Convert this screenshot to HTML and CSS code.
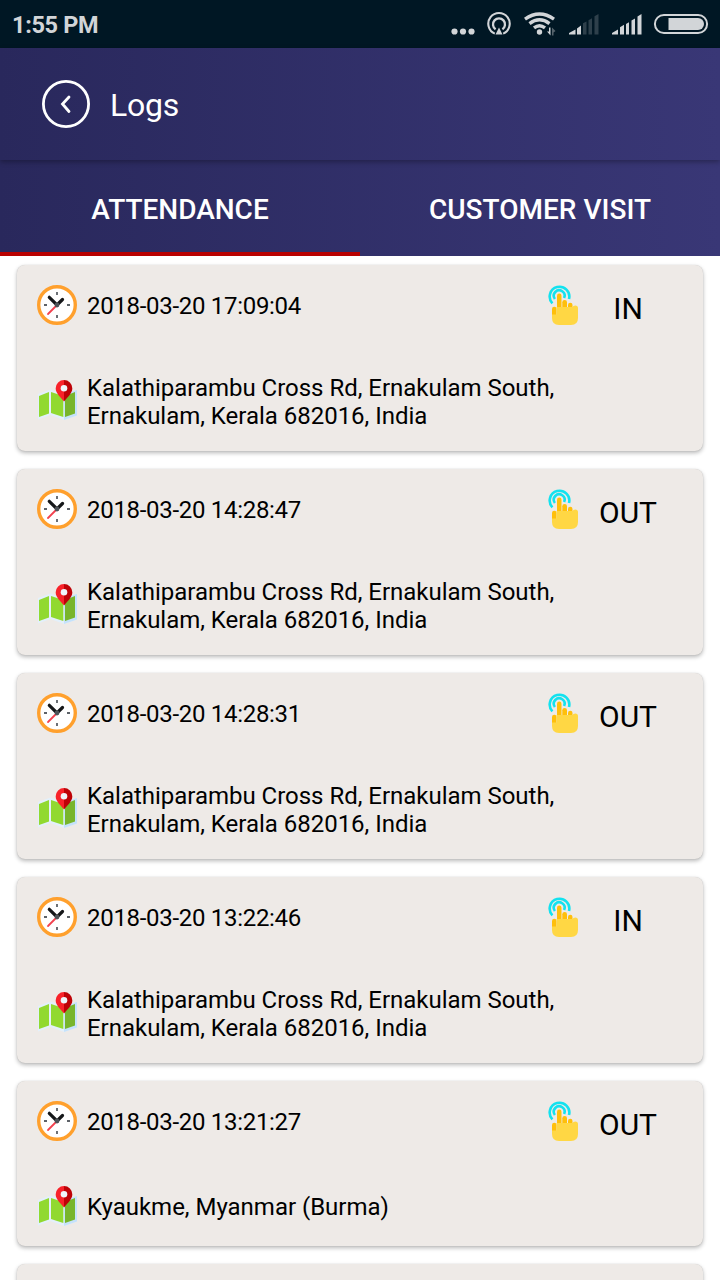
FILE: index.html
```html
<!DOCTYPE html>
<html lang="en">
<head>
    <meta charset="UTF-8" />
    <title>Logs</title>
    <link rel="stylesheet" href="styles.css">
</head>

<body>
<!-- Shared icons -->
<svg class="sprite" width="0" height="0">
    <symbol id="icon-clock" viewBox="0 0 40 40">
        <circle cx="20" cy="20" r="18.3" fill="#fff" stroke="#ffa02d" stroke-width="3.4"/>
        <path d="M20 7v3M20 30v3M7 20h3M30 20h3" stroke="#5d6268" stroke-width="1.8"/>
        <path d="M20 20l-9 9" stroke="#f2414e" stroke-width="1.8" stroke-linecap="round"/>
        <path d="M12.3 12.3L20 20l5.5-5.5" fill="none" stroke="#151719" stroke-width="3.2" stroke-linecap="round"/>
        <circle cx="20" cy="20" r="2.4" fill="#4d5257"/>
    </symbol>
    <symbol id="icon-map" viewBox="0 0 40 40">
        <path d="M1 14L13.5 9.5l13.5 4.5L40 10v25.5L27 40l-13.5-5L1 39.5z" fill="#e3f0fb"/>
        <path d="M27 14L40 10v25.5L27 40z" fill="#c5e2fb"/>
        <path d="M2 16l10-4v21.5L2 37z" fill="#91d930"/>
        <path d="M14 12l12.3 4v21L14 33z" fill="#91d930"/>
        <path d="M28 16l10-4v21.5L28 37z" fill="#78b52c"/>
        <path d="M27 0a8.3 8.3 0 0 0-8.3 8.4C18.7 13 23 16.5 27 21.5z" fill="#f8222a"/>
        <path d="M27 0a8.3 8.3 0 0 1 8.3 8.4C35.3 13 31 16.5 27 21.5z" fill="#be0207"/>
        <circle cx="27" cy="8.2" r="3.3" fill="#eff5fa"/>
    </symbol>
    <symbol id="icon-touch" viewBox="0 0 40 40">
        <g fill="none" stroke="#13e2ef" stroke-width="2.6">
            <path d="M9.4 18.3A9.8 9.8 0 1 1 26 14"/>
            <path d="M11.9 14A5.4 5.4 0 1 1 21.1 13"/>
        </g>
        <g fill="#ffbf0b">
            <rect x="14" y="8.500" width="4.500" height="20" rx="2.200"/>
            <rect x="19.300" y="15" width="4.700" height="14" rx="2.300"/>
            <rect x="25" y="17.800" width="4.500" height="12" rx="2.200"/>
            <rect x="9" y="21.700" width="4.500" height="10" rx="2.200"/>
        </g>
        <path d="M9 29.500h4.500V22h16.300q0-1.500 2.500-1.500 2.700 0 2.700 2.500v10q0 7-7 7H16q-7 0-7-7z" fill="#ffd744"/>
    </symbol>
</svg>

<div class="status-bar">
    <div class="status-time">1:55 PM</div>
    <svg class="status-icons" width="280" height="48" viewBox="0 0 280 48" fill="#d2d5d8">
        <!-- More notifications -->
        <circle cx="14.5" cy="31.5" r="3.1"/>
        <circle cx="23" cy="31.5" r="3.1"/>
        <circle cx="31.5" cy="31.5" r="3.1"/>
        <!-- Hotspot -->
        <g fill="none" stroke="#d2d5d8" stroke-width="2.1">
            <path d="M54.8 33.6A10.7 10.7 0 1 1 63.2 33.6"/>
            <path d="M55.6 29.3A6 6 0 1 1 62.4 29.3" stroke-width="2.3"/>
        </g>
        <path d="M59 27.5l3.5 7h-7z"/>
        <!-- Wifi -->
        <g fill="none" stroke="#d2d5d8" stroke-width="3.4">
            <path d="M85 19.2Q99.5 9 114 19.2"/>
            <path d="M89.5 23.6Q99.5 16 109.5 23.6"/>
            <path d="M94 27.8Q99.5 23.5 105 27.8"/>
        </g>
        <circle cx="99.5" cy="32" r="2.7"/>
        <path d="M110.5 27.5v8l-3.5-4h2v-4z"/>
        <path d="M112 27.5v8h1.5v-3l2-1.5z" opacity="0.4"/>
        <!-- Signal, first sim -->
        <path d="M129 34.5v-1.5l6.5-3.500v5zM137 28.500l4-3v9h-4z"/>
        <path d="M143 23.300l3.500-1.800v13H143zM148.500 20.200l3.500-2v16.300h-3.500zM154.500 16.200l4-2.200v20.500h-4z" opacity="0.22"/>
        <!-- Signal, second sim -->
        <path d="M172 34.500v-1.500l6-3.500v5zM180 27.300l4-2.500v9.700h-4zM186 24l3-1.800v12.300h-3zM191.500 20.500l3.500-2v16h-3.500zM197.500 16.500l4-2.500v20.500h-4z"/>
        <!-- Battery -->
        <rect x="214.9" y="15" width="52.2" height="18" rx="9" fill="none" stroke="#d2d5d8" stroke-width="2"/>
        <path d="M228.500 18H258a6 6 0 0 1 0 12h-29.500z"/>
    </svg>
</div>

<div class="header">
    <div class="toolbar">
        <svg class="back-button" width="48" height="48" viewBox="0 0 48 48" fill="none" stroke="#fff">
            <circle cx="24" cy="24" r="22.6" stroke-width="2.8"/>
            <path d="M27 17L20.500 24l6.500 7.500" stroke-width="2.8" stroke-linecap="round"/>
        </svg>
        <h1 class="title">Logs</h1>
    </div>
    <div class="tabs">
        <div class="tab active">ATTENDANCE</div>
        <div class="tab">CUSTOMER VISIT</div>
    </div>
</div>

<div class="log-list">
    <div class="log-card">
        <div class="log-row">
            <svg class="icon"><use href="#icon-clock"/></svg>
            <div class="date">2018-03-20 17:09:04</div>
            <svg class="icon touch"><use href="#icon-touch"/></svg>
            <div class="type">IN</div>
        </div>
        <div class="log-row address-row">
            <svg class="icon"><use href="#icon-map"/></svg>
            <div class="address">Kalathiparambu Cross Rd, Ernakulam South, Ernakulam, Kerala 682016, India</div>
        </div>
    </div>

    <div class="log-card">
        <div class="log-row">
            <svg class="icon"><use href="#icon-clock"/></svg>
            <div class="date">2018-03-20 14:28:47</div>
            <svg class="icon touch"><use href="#icon-touch"/></svg>
            <div class="type">OUT</div>
        </div>
        <div class="log-row address-row">
            <svg class="icon"><use href="#icon-map"/></svg>
            <div class="address">Kalathiparambu Cross Rd, Ernakulam South, Ernakulam, Kerala 682016, India</div>
        </div>
    </div>

    <div class="log-card">
        <div class="log-row">
            <svg class="icon"><use href="#icon-clock"/></svg>
            <div class="date">2018-03-20 14:28:31</div>
            <svg class="icon touch"><use href="#icon-touch"/></svg>
            <div class="type">OUT</div>
        </div>
        <div class="log-row address-row">
            <svg class="icon"><use href="#icon-map"/></svg>
            <div class="address">Kalathiparambu Cross Rd, Ernakulam South, Ernakulam, Kerala 682016, India</div>
        </div>
    </div>

    <div class="log-card">
        <div class="log-row">
            <svg class="icon"><use href="#icon-clock"/></svg>
            <div class="date">2018-03-20 13:22:46</div>
            <svg class="icon touch"><use href="#icon-touch"/></svg>
            <div class="type">IN</div>
        </div>
        <div class="log-row address-row">
            <svg class="icon"><use href="#icon-map"/></svg>
            <div class="address">Kalathiparambu Cross Rd, Ernakulam South, Ernakulam, Kerala 682016, India</div>
        </div>
    </div>

    <div class="log-card">
        <div class="log-row">
            <svg class="icon"><use href="#icon-clock"/></svg>
            <div class="date">2018-03-20 13:21:27</div>
            <svg class="icon touch"><use href="#icon-touch"/></svg>
            <div class="type">OUT</div>
        </div>
        <div class="log-row address-row">
            <svg class="icon"><use href="#icon-map"/></svg>
            <div class="address">Kyaukme, Myanmar (Burma)</div>
        </div>
    </div>

    <div class="log-card"></div>
</div>
</body>
</html>
```

FILE: styles.css
```css
* {
    margin: 0;
    padding: 0;
    box-sizing: border-box;
}

:root {
    --status-bg: #001724;
    --status-text: #d2d5d8;
    --header-from: #29285c;
    --header-to: #393776;
    --accent-color: #b80000;
    --card-bg: #eeeae7;
}

body {
    height: 100vh;
    display: flex;
    flex-direction: column;
    overflow: hidden;
    background-color: #fff;
    color: #000;
    font-family: Roboto, 'Liberation Sans', sans-serif;
}

.sprite {
    display: none;
}

.status-bar {
    display: flex;
    justify-content: space-between;
    align-items: center;
    flex: none;
    height: 48px;
    padding-left: 12px;
    background-color: var(--status-bg);
}

.status-time {
    padding-top: 2px;
    color: var(--status-text);
    font-size: 23.5px;
    font-weight: bold;
    letter-spacing: -0.35px;
}

/* Toolbar and tabs share one gradient */
.header {
    flex: none;
    background: linear-gradient(to right, var(--header-from), var(--header-to));
    color: #fff;
}

.toolbar {
    display: flex;
    align-items: center;
    gap: 20px;
    height: 112px;
    padding-left: 42px;
    box-shadow: 0 2px 5px rgba(0, 0, 0, 0.3);
}

.title {
    padding-top: 2px;
    font-size: 32px;
    font-weight: normal;
    letter-spacing: -0.2px;
}

.tabs {
    display: flex;
    height: 96px;
}

.tab {
    flex: 1;
    padding-top: 2px;
    border-bottom: 4px solid transparent;
    font-size: 28px;
    font-weight: 500;
    line-height: 96px;
    text-align: center;
}

.tab.active {
    border-bottom-color: var(--accent-color);
}

.log-list {
    display: flex;
    flex-direction: column;
    gap: 18px;
    padding: 9px 17px 0;
}

.log-card {
    flex: none;
    min-height: 40px;
    padding: 20px;
    border-radius: 8px;
    background-color: var(--card-bg);
    box-shadow: 0 0 1px rgba(0, 0, 0, 0.2), 0 2px 4px rgba(0, 0, 0, 0.28);
}

.log-row {
    display: flex;
    align-items: center;
    font-size: 24px;
    line-height: 28px;
}

.address-row {
    min-height: 40px;
    margin-top: 45px;
}

.icon {
    flex: none;
    width: 40px;
    height: 40px;
    margin-right: 10px;
}

.icon.touch {
    margin-right: 0;
}

.address-row .icon {
    margin-top: -0.5px;
}

.date {
    flex: 1;
    padding-top: 2px;
    letter-spacing: -0.3px;
}

.type {
    width: 90px;
    padding-top: 8px;
    margin-right: 10px;
    font-size: 30px;
    text-align: center;
}

.address {
    width: 500px;
    padding: 3.5px 0 1.5px;
    letter-spacing: -0.02px;
}
```
